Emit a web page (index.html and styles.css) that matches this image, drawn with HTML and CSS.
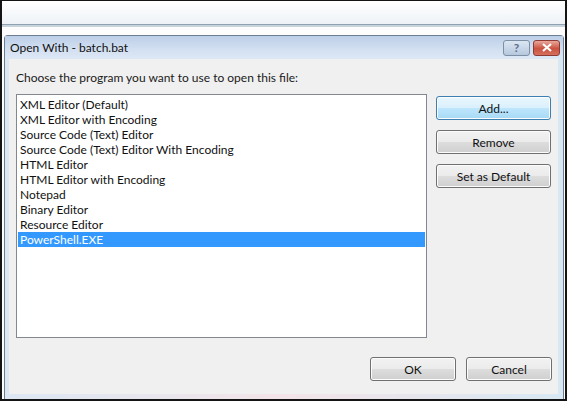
FILE: index.html
```html
<!DOCTYPE html>
<html lang="en">
<head>
    <meta charset="UTF-8">
    <title>Open With - batch.bat</title>
    <link rel="stylesheet" href="styles.css">
</head>
<body>
    <div class="screen">
        <div class="topstrip"></div>
        <div class="dialog">
            <div class="titlebar">
                <span class="title">Open With - batch.bat</span>
                <div class="capbuttons">
                    <div class="cap help">?</div>
                    <div class="cap close">
                        <svg width="12" height="9" viewBox="0 0 12 9"><path d="M2 1 L10 8 M10 1 L2 8" stroke="#fff" stroke-width="2.2"/></svg>
                    </div>
                </div>
            </div>
            <div class="body">
                <p class="prompt">Choose the program you want to use to open this file:</p>
                <div class="main">
                    <ul class="list">
                        <li>XML Editor (Default)</li>
                        <li>XML Editor with Encoding</li>
                        <li>Source Code (Text) Editor</li>
                        <li>Source Code (Text) Editor With Encoding</li>
                        <li>HTML Editor</li>
                        <li>HTML Editor with Encoding</li>
                        <li>Notepad</li>
                        <li>Binary Editor</li>
                        <li>Resource Editor</li>
                        <li class="selected">PowerShell.EXE</li>
                    </ul>
                    <div class="side">
                        <button class="btn focused">Add...</button>
                        <button class="btn">Remove</button>
                        <button class="btn">Set as Default</button>
                    </div>
                </div>
                <div class="footer">
                    <button class="btn small">OK</button>
                    <button class="btn small">Cancel</button>
                </div>
            </div>
        </div>
    </div>
</body>
</html>
```

FILE: styles.css
```css
* {
    box-sizing: border-box;
}
body {
    margin: 0;
    font-family: Lato, "Noto Sans", sans-serif;
    font-size: 12px;
}
.screen {
    width: 567px;
    height: 401px;
    border: 2px solid #141414;
    border-top-width: 1px;
    background: #fdfdfe;
    overflow: hidden;
}
.topstrip {
    height: 24px;
    background: linear-gradient(#ffffff, #eef2f7);
    border-bottom: 1px solid #8ea2b4;
    box-shadow: 0 2px 0 #c9d3dc;
    margin-bottom: 10px;
}
.dialog {
    margin: 0 1px 0 2px;
    height: 364px;
    border: 1px solid #6b7d90;
    border-bottom: none;
    border-radius: 4px 4px 0 0;
    background: linear-gradient(90deg, #dce7f3, #f3e4e8 50%, #d8e8f3);
    padding: 0 5px 5px 4px;
    display: flex;
    flex-direction: column;
}
.titlebar {
    height: 23px;
    display: flex;
    align-items: center;
    justify-content: space-between;
    margin: 0 -5px 0 -4px;
    padding: 0 3px 0 5px;
    background: linear-gradient(#bccfe8, #d3e0f1 60%, #dde8f5);
}
.title {
    color: #111;
    font-size: 12px;
}
.capbuttons {
    display: flex;
    gap: 3px;
}
.cap {
    width: 27px;
    height: 16px;
    border: 1px solid #7d8fa5;
    border-radius: 3px;
    display: flex;
    align-items: center;
    justify-content: center;
}
.help {
    background: linear-gradient(#dbe6f3, #b6c8de);
    color: #5b6f88;
    font-weight: bold;
    font-size: 12px;
}
.close {
    border-color: #8d3b33;
    background: linear-gradient(#e9a89b, #c9523f 55%, #d5705e);
}
.body {
    flex: 1;
    background: #f0f0f0;
    padding: 11px 0 0 7px;
    display: flex;
    flex-direction: column;
}
.prompt {
    margin: 0 0 8px 0;
    color: #1a1a1a;
    line-height: 16px;
}
.main {
    display: flex;
    align-items: flex-start;
}
.list {
    list-style: none;
    margin: 0;
    padding: 2px 1px;
    width: 411px;
    height: 244px;
    background: #fff;
    border: 1px solid #828790;
    color: #111;
}
.list li {
    height: 15px;
    line-height: 15px;
    padding-left: 2px;
}
.list li.selected {
    background: #3399ff;
    color: #fff;
}
.side {
    display: flex;
    flex-direction: column;
    gap: 10px;
    margin-left: 9px;
    padding-top: 2px;
}
.btn {
    width: 115px;
    height: 24px;
    font-family: inherit;
    font-size: 12px;
    color: #111;
    border: 1px solid #707070;
    border-radius: 3px;
    background: linear-gradient(#f2f2f2 0%, #ebebeb 50%, #dddddd 51%, #cfcfcf 100%);
    box-shadow: inset 0 0 0 1px #fcfcfc;
    padding: 0;
}
.btn.focused {
    border-color: #3c7fb1;
    background: linear-gradient(#eaf6fd 0%, #d9f0fc 50%, #bee6fd 51%, #a7d9f5 100%);
}
.footer {
    margin-top: auto;
    display: flex;
    justify-content: flex-end;
    gap: 10px;
    padding: 0 6px 13px 0;
}
.btn.small {
    width: 86px;
}
```
